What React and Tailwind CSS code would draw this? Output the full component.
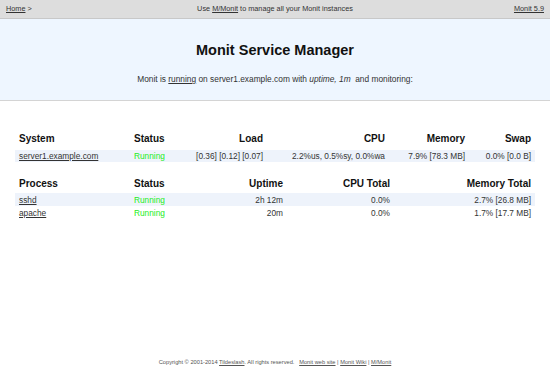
export default function App() {
  const sys = {
    name: 'server1.example.com',
    status: 'Running',
    load: '[0.36] [0.12] [0.07]',
    cpu: '2.2%us, 0.5%sy, 0.0%wa',
    memory: '7.9% [78.3 MB]',
    swap: '0.0% [0.0 B]',
  };
  const processes = [
    { name: 'sshd', status: 'Running', uptime: '2h 12m', cpu: '0.0%', memory: '2.7% [26.8 MB]' },
    { name: 'apache', status: 'Running', uptime: '20m', cpu: '0.0%', memory: '1.7% [17.7 MB]' },
  ];

  return (
    <div className="flex h-[383px] w-[550px] flex-col bg-white text-[#333] [font-family:'Liberation_Sans',Arial,sans-serif]">
      <div className="flex h-[19px] items-center justify-between border-b border-[#c8c8c8] bg-[#dddddd] px-[6px] text-[7.3px] text-[#333]">
        <div className="w-[80px]">
          <a className="underline">Home</a> &gt;
        </div>
        <div>
          Use <a className="underline">M/Monit</a> to manage all your Monit instances
        </div>
        <div className="w-[80px] text-right">
          <a className="underline">Monit 5.9</a>
        </div>
      </div>

      <div className="flex h-[82px] flex-col items-center border-b border-[#d4d4d4] bg-[#eef6ff]">
        <h1 className="mt-[22px] text-[14.5px] font-bold leading-[18px] text-[#111]">Monit Service Manager</h1>
        <p className="mt-[15px] text-[8.35px] leading-[10px] text-[#333]">
          Monit is <a className="underline">running</a> on server1.example.com with <i>uptime, 1m</i>&nbsp; and monitoring:
        </p>
      </div>

      <div className="mx-[15px] mt-[31px]">
        <div className="grid grid-cols-[115px_60px_77px_122px_80px_66px] text-[10px] font-bold leading-[14px] text-[#111]">
          <div className="px-[4px]">System</div>
          <div className="px-[4px]">Status</div>
          <div className="px-[4px] text-right">Load</div>
          <div className="px-[4px] text-right">CPU</div>
          <div className="px-[4px] text-right">Memory</div>
          <div className="px-[4px] text-right">Swap</div>
        </div>
        <div className="mt-[4px] grid h-[12px] grid-cols-[115px_60px_77px_122px_80px_66px] items-center bg-[#eef3fb] text-[8.3px] leading-[12px]">
          <div className="px-[4px]"><a className="underline">{sys.name}</a></div>
          <div className="px-[4px] text-[#22ee22]">{sys.status}</div>
          <div className="px-[4px] text-right">{sys.load}</div>
          <div className="px-[4px] text-right">{sys.cpu}</div>
          <div className="px-[4px] text-right">{sys.memory}</div>
          <div className="px-[4px] text-right">{sys.swap}</div>
        </div>
      </div>

      <div className="mx-[15px] mt-[15px]">
        <div className="grid grid-cols-[115px_60px_97px_107px_141px] text-[10px] font-bold leading-[14px] text-[#111]">
          <div className="px-[4px]">Process</div>
          <div className="px-[4px]">Status</div>
          <div className="px-[4px] text-right">Uptime</div>
          <div className="px-[4px] text-right">CPU Total</div>
          <div className="px-[4px] text-right">Memory Total</div>
        </div>
        <div className="mt-[2px]">
          {processes.map((p, i) => (
            <div
              key={p.name}
              className={
                'grid h-[13px] grid-cols-[115px_60px_97px_107px_141px] items-center text-[8.3px] leading-[12px] ' +
                (i % 2 === 0 ? 'bg-[#eef3fb]' : 'bg-white')
              }
            >
              <div className="px-[4px]"><a className="underline">{p.name}</a></div>
              <div className="px-[4px] text-[#22ee22]">{p.status}</div>
              <div className="px-[4px] text-right">{p.uptime}</div>
              <div className="px-[4px] text-right">{p.cpu}</div>
              <div className="px-[4px] text-right">{p.memory}</div>
            </div>
          ))}
        </div>
      </div>

      <div className="mt-auto mb-[16px] text-center text-[5.7px] text-[#555]">
        Copyright © 2001-2014 <a className="underline">Tildeslash</a>. All rights reserved.&nbsp;&nbsp;&nbsp;
        <a className="underline">Monit web site</a> | <a className="underline">Monit Wiki</a> | <a className="underline">M/Monit</a>
      </div>
    </div>
  );
}
